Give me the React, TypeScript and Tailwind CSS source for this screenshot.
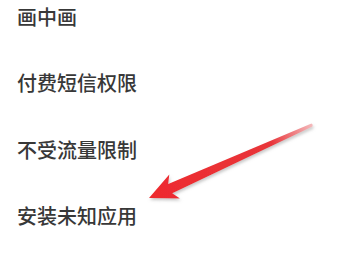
const items = ["画中画", "付费短信权限", "不受流量限制", "安装未知应用", "修改系统设置"];

function Arrow() {
  return (
    <svg
      className="pointer-events-none absolute left-0 top-0"
      width="360"
      height="270"
      viewBox="0 0 360 270"
    >
      <defs>
        <linearGradient id="shaft" x1="149" y1="198" x2="312" y2="125" gradientUnits="userSpaceOnUse">
          <stop offset="0" stopColor="#ee2a2e" />
          <stop offset="0.75" stopColor="#e8353a" />
          <stop offset="1" stopColor="#f4b9bb" />
        </linearGradient>
        <filter id="soft" x="-10%" y="-10%" width="120%" height="130%">
          <feGaussianBlur in="SourceAlpha" stdDeviation="1.6" />
          <feOffset dx="1" dy="2" result="b" />
          <feFlood floodColor="#9a9a9a" floodOpacity="0.55" />
          <feComposite in2="b" operator="in" />
          <feMerge>
            <feMergeNode />
            <feMergeNode in="SourceGraphic" />
          </feMerge>
        </filter>
      </defs>
      <path
        d="M149 198 L169.3 174.6 L168.2 184 L311.5 123.6 Q313.5 124.8 312.4 126.6 L172.3 193.2 L179.9 198.4 Z"
        fill="url(#shaft)"
        filter="url(#soft)"
      />
    </svg>
  );
}

export default function App() {
  return (
    <div className="relative h-[270px] w-[360px] overflow-hidden bg-white">
      <ul className="flex flex-col gap-[46.3px] pl-[17px] pt-[7px]">
        {items.map((t) => (
          <li
            key={t}
            className="text-[20px] leading-[20px] font-medium text-[#383838] [font-family:'Noto_Sans_CJK_SC',sans-serif]"
          >
            {t}
          </li>
        ))}
      </ul>
      <Arrow />
    </div>
  );
}
